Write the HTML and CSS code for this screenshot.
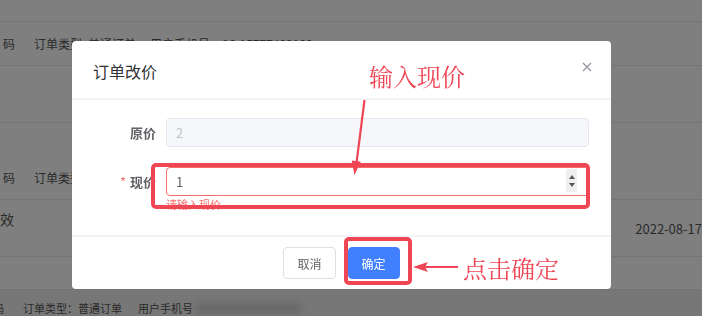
FILE: index.html
```html
<!DOCTYPE html>
<html lang="zh-CN">
<head>
    <meta charset="UTF-8">
    <meta name="viewport" content="width=device-width, initial-scale=1.0">
    <title>订单改价</title>
    <link rel="stylesheet" href="styles.css">
</head>
<body>
    <!-- 背景订单列表 -->
    <div class="page">
        <div class="row row-top"></div>
        <div class="row row-info">
            <span class="cut">码</span>
            <span>订单类型</span>
            <span>普通订单</span>
            <span>用户手机号</span>
            <span>86-15777402102</span>
        </div>
        <div class="row row-empty"></div>
        <div class="row row-info2">
            <span class="cut">码</span>
            <span>订单类型</span>
        </div>
        <div class="row row-goods">
            <span class="status">效</span>
            <span class="date">2022-08-17</span>
        </div>
        <div class="row row-empty2"></div>
        <div class="row row-bottom">
            <span class="cut2">码</span>
            <span class="type">订单类型：普通订单</span>
            <span>用户手机号</span>
            <span class="blur"></span>
        </div>
    </div>

    <div class="modal-overlay"></div>

    <div class="dialog">
        <div class="dialog-header">
            <span class="dialog-title">订单改价</span>
            <svg class="close-icon" width="10" height="10" viewBox="0 0 10 10">
                <path d="M1 1 L9 9 M9 1 L1 9" stroke="#909399" stroke-width="1.2" fill="none"/>
            </svg>
        </div>
        <div class="dialog-body">
            <div class="form-item">
                <label class="form-label">原价</label>
                <div class="input disabled">2</div>
            </div>
            <div class="form-item">
                <label class="form-label"><span class="required">*</span>现价</label>
                <div class="input-wrap">
                    <div class="input error">1
                        <span class="spinner">
                            <svg width="10" height="20" viewBox="0 0 10 20">
                                <path d="M2 8 L5 4 L8 8 Z" fill="#555"/>
                                <path d="M2 12 L5 16 L8 12 Z" fill="#555"/>
                            </svg>
                        </span>
                    </div>
                    <div class="error-text">请输入现价</div>
                </div>
            </div>
        </div>
        <div class="dialog-footer">
            <button class="btn">取消</button>
            <button class="btn btn-primary">确定</button>
        </div>
    </div>

    <!-- 标注 -->
    <svg class="marks" width="702" height="316" viewBox="0 0 702 316">
        <rect x="153" y="165" width="435" height="42" rx="3" fill="none" stroke="#ef4655" stroke-width="4"/>
        <rect x="346" y="239" width="64" height="44" rx="3" fill="none" stroke="#ef4655" stroke-width="4"/>
        <line x1="364.5" y1="100" x2="356.5" y2="163" stroke="#ef4655" stroke-width="2.2"/>
        <polygon points="354.4,175 351.8,160.5 360.8,161.7" fill="#ef4655"/>
        <line x1="458" y1="267" x2="424" y2="267" stroke="#ef4655" stroke-width="2.2"/>
        <polygon points="413,267 428,262 425,267 428,272" fill="#ef4655"/>
    </svg>
    <span class="note note-top">输入现价</span>
    <span class="note note-bottom">点击确定</span>
</body>
</html>
```

FILE: styles.css
```css
body {
    margin: 0;
    font-family: "Noto Sans CJK SC", "Liberation Sans", sans-serif;
    background: #fff;
    overflow: hidden;
}

.page {
    width: 702px;
    height: 316px;
    font-size: 12px;
    color: #555;
}

.row {
    display: flex;
    align-items: center;
    border-bottom: 1px solid #e8e8e8;
    white-space: nowrap;
}

.row-top {
    height: 21px;
}

.row-info {
    height: 43px;
}

.row-info span,
.row-info2 span {
    margin-right: 7px;
}

.row-info .cut,
.row-info2 .cut {
    margin-left: 3px;
    margin-right: 19px;
}

.row-info span:nth-child(2) {
    margin-right: 6px;
}

.row-info span:nth-child(3) {
    margin-right: 14px;
}

.row-info span:nth-child(4) {
    margin-right: 12px;
}

.row-empty {
    height: 56px;
}

.row-info2 {
    height: 76px;
    align-items: flex-end;
    line-height: 42px;
}

.row-goods {
    height: 56px;
    justify-content: space-between;
    align-items: flex-start;
}

.status {
    font-size: 14px;
    margin-top: 9px;
}

.date {
    font-size: 13px;
    margin-top: 19px;
}

.row-empty2 {
    height: 32px;
    border-bottom: none;
}

.row-bottom {
    height: 27px;
    font-size: 11px;
    background: #eee;
    border-top: 1px solid #e8e8e8;
    border-bottom: none;
    padding-top: 10px;
    box-sizing: border-box;
}

.row-bottom .cut2 {
    margin-left: -7px;
    margin-right: 19px;
}

.row-bottom .type {
    margin-right: 16px;
}

.row-bottom .blur {
    width: 105px;
    height: 12px;
    margin-left: 3px;
    background: #d4d4d4;
    filter: blur(3px);
}

.modal-overlay {
    position: fixed;
    top: 0;
    left: 0;
    width: 100%;
    height: 100%;
    background: rgba(0, 0, 0, 0.5);
}

.dialog {
    position: fixed;
    top: 41px;
    left: 72px;
    width: 539px;
    height: 248px;
    background: #fff;
    border-radius: 4px;
    display: flex;
    flex-direction: column;
}

.dialog-header {
    height: 59px;
    padding: 0 19px 0 21px;
    display: flex;
    align-items: center;
    justify-content: space-between;
    border-bottom: 2px solid #f2f3f7;
    box-sizing: border-box;
}

.dialog-title {
    font-size: 16px;
    color: #303133;
    margin-top: 3px;
}

.close-icon {
    margin-top: -5px;
}

.dialog-body {
    padding: 18px 22px 0 0;
    height: 135px;
    box-sizing: border-box;
    display: flex;
    flex-direction: column;
    gap: 20px;
}

.form-item {
    display: flex;
    align-items: flex-start;
}

.form-label {
    width: 84px;
    padding-right: 10px;
    text-align: right;
    font-size: 13px;
    font-weight: bold;
    color: #606266;
    line-height: 29px;
    flex-shrink: 0;
}

.required {
    color: #f56c6c;
    font-weight: normal;
    margin-right: 4px;
}

.input-wrap {
    flex: 1;
}

.input {
    height: 29px;
    box-sizing: border-box;
    border: 1px solid #e4e7ed;
    border-radius: 4px;
    padding-left: 9px;
    font-size: 13px;
    line-height: 27px;
    color: #606266;
    position: relative;
    flex: 1;
}

.input.disabled {
    background: #f5f7fa;
    color: #c0c4cc;
}

.input.error {
    border-color: #f56c6c;
}

.spinner {
    position: absolute;
    right: 11px;
    top: 1px;
    width: 11px;
    height: 23px;
    background: #efefef;
    display: flex;
    align-items: center;
    justify-content: center;
}

.error-text {
    font-size: 11px;
    color: #f56c6c;
    line-height: 14px;
    margin-top: 1px;
}

.dialog-footer {
    flex: 1;
    border-top: 2px solid #f2f3f7;
    display: flex;
    justify-content: center;
    align-items: flex-start;
    padding-top: 10px;
    gap: 12px;
}

.btn {
    height: 32px;
    padding: 0 13px;
    font-size: 12px;
    font-family: "Noto Sans CJK SC", sans-serif;
    border: 1px solid #dcdfe6;
    border-radius: 4px;
    background: #fff;
    color: #606266;
}

.btn-primary {
    background: #4080ff;
    border-color: #4080ff;
    color: #fff;
}

.marks {
    position: fixed;
    top: 0;
    left: 0;
    pointer-events: none;
}

.note {
    position: fixed;
    font-family: "Noto Serif CJK SC", "Noto Sans CJK SC", serif;
    font-size: 24px;
    line-height: 24px;
    color: #ef4655;
}

.note-top {
    left: 369px;
    top: 64px;
}

.note-bottom {
    left: 463px;
    top: 256px;
}
```
